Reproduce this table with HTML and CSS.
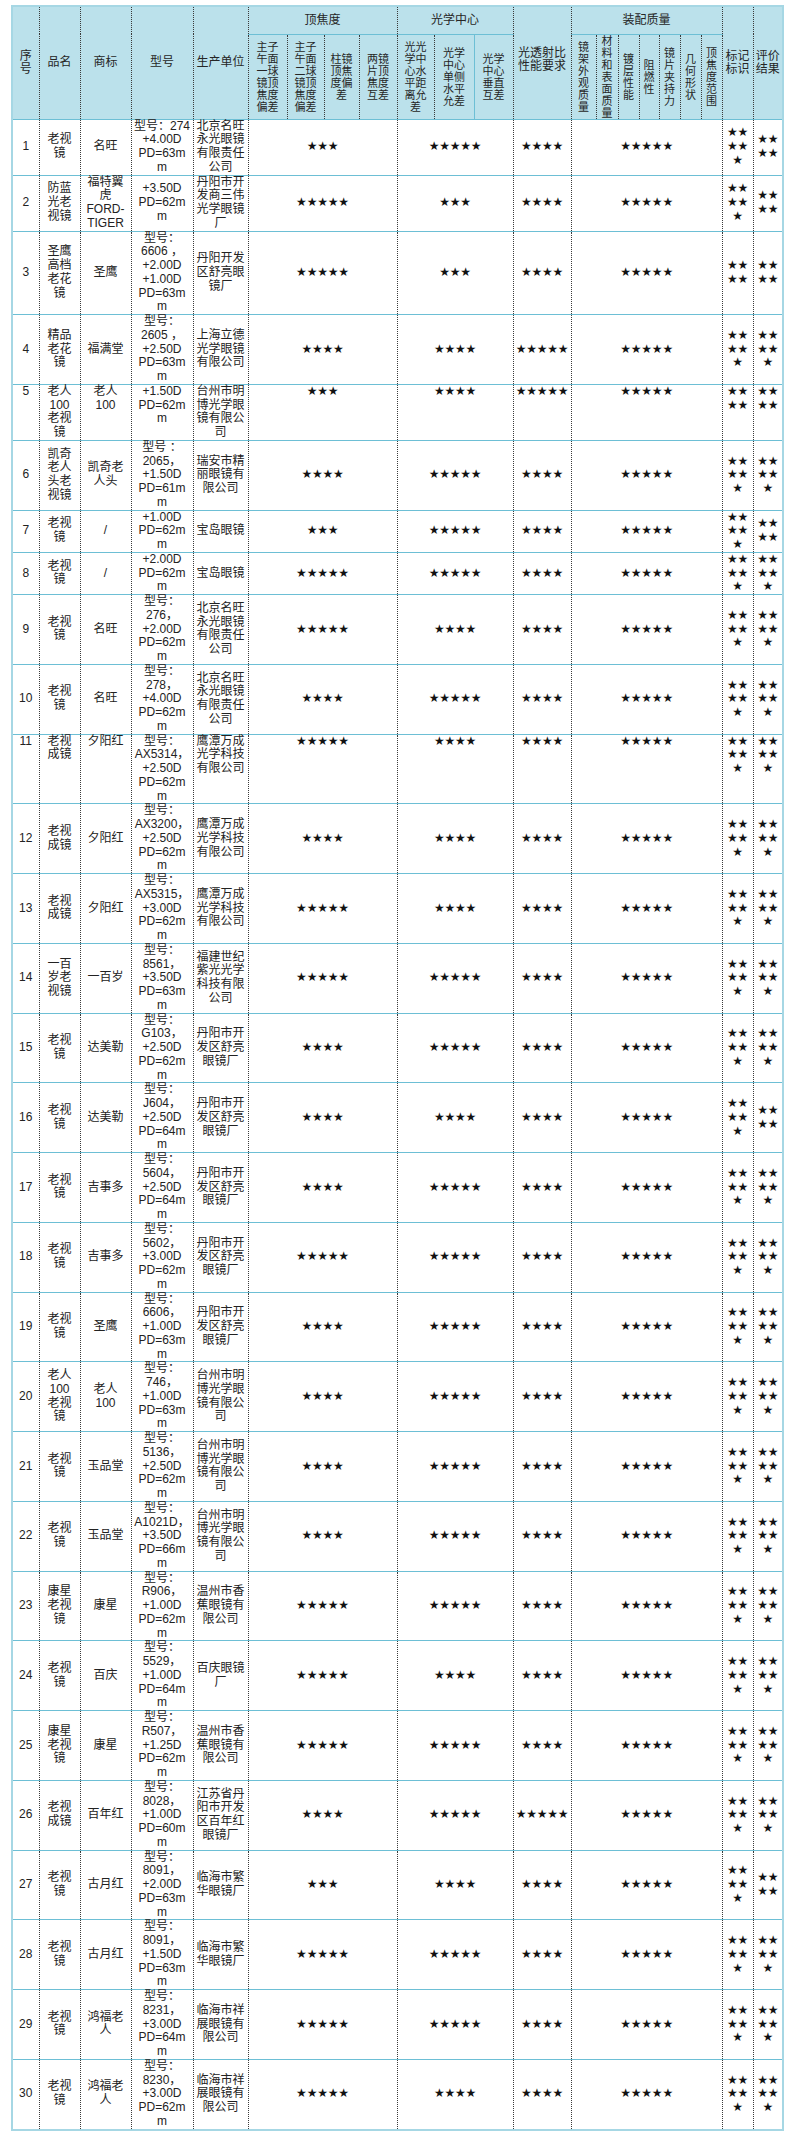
FILE: index.html
```html
<!DOCTYPE html>
<html lang="zh-CN">
<head>
<meta charset="utf-8">
<title>老视镜比较试验结果</title>
<link rel="stylesheet" href="styles.css">
</head>
<body>
<table class="report">
<colgroup>
<col class="c-idx"><col class="c-name"><col class="c-brand"><col class="c-model"><col class="c-maker">
<col class="c-v1"><col class="c-v2"><col class="c-v3"><col class="c-v4">
<col class="c-o1"><col class="c-o2"><col class="c-o3">
<col class="c-trans">
<col class="c-a1"><col class="c-a2"><col class="c-a3"><col class="c-a4"><col class="c-a5"><col class="c-a6"><col class="c-a7">
<col class="c-mark"><col class="c-eval">
</colgroup>
<thead>
<tr class="grp">
<th rowspan="2" class="idx">序<br>号</th>
<th rowspan="2">品名</th>
<th rowspan="2">商标</th>
<th rowspan="2">型号</th>
<th rowspan="2">生产单位</th>
<th colspan="4" class="g">顶焦度</th>
<th colspan="3" class="g">光学中心</th>
<th rowspan="2" class="up">光透射比<br>性能要求</th>
<th colspan="7" class="g">装配质量</th>
<th rowspan="2" class="two">标记<br>标识</th>
<th rowspan="2" class="two">评价<br>结果</th>
</tr>
<tr class="sub">
<th>主子<br>午面<br>一球<br>镜顶<br>焦度<br>偏差</th>
<th>主子<br>午面<br>二球<br>镜顶<br>焦度<br>偏差</th>
<th>柱镜<br>顶焦<br>度偏<br>差</th>
<th>两镜<br>片顶<br>焦度<br>互差</th>
<th>光光<br>学中<br>心水<br>平距<br>离允<br>差</th>
<th>光学<br>中心<br>单侧<br>水平<br>允差</th>
<th class="solid-r">光学<br>中心<br>垂直<br>互差</th>
<th>镜<br>架<br>外<br>观<br>质<br>量</th>
<th>材<br>料<br>和<br>表<br>面<br>质<br>量</th>
<th>镀<br>层<br>性<br>能</th>
<th>阻<br>燃<br>性</th>
<th>镜<br>片<br>夹<br>持<br>力</th>
<th>几<br>何<br>形<br>状</th>
<th>顶<br>焦<br>度<br>范<br>围</th>
</tr>
</thead>
<tbody>
<tr><td>1</td><td>老视<br>镜</td><td>名旺</td><td>型号：274<br>+4.00D<br>PD=63m<br>m</td><td>北京名旺<br>永光眼镜<br>有限责任<br>公司</td><td colspan="4" class="st">★★★</td><td colspan="3" class="st">★★★★★</td><td class="st">★★★★</td><td colspan="7" class="st">★★★★★</td><td class="st wrap">★★★★★</td><td class="st wrap">★★★★</td></tr>
<tr><td>2</td><td>防蓝<br>光老<br>视镜</td><td>福特翼<br>虎<br>FORD-<br>TIGER</td><td>+3.50D<br>PD=62m<br>m</td><td>丹阳市开<br>发商三伟<br>光学眼镜<br>厂</td><td colspan="4" class="st">★★★★★</td><td colspan="3" class="st">★★★</td><td class="st">★★★★</td><td colspan="7" class="st">★★★★★</td><td class="st wrap">★★★★★</td><td class="st wrap">★★★★</td></tr>
<tr><td>3</td><td>圣鹰<br>高档<br>老花<br>镜</td><td>圣鹰</td><td>型号：<br>6606 ，<br>+2.00D<br>+1.00D<br>PD=63m<br>m</td><td>丹阳开发<br>区舒亮眼<br>镜厂</td><td colspan="4" class="st">★★★★★</td><td colspan="3" class="st">★★★</td><td class="st">★★★★</td><td colspan="7" class="st">★★★★★</td><td class="st wrap">★★★★</td><td class="st wrap">★★★★</td></tr>
<tr><td>4</td><td>精品<br>老花<br>镜</td><td>福满堂</td><td>型号：<br>2605 ，<br>+2.50D<br>PD=63m<br>m</td><td>上海立德<br>光学眼镜<br>有限公司</td><td colspan="4" class="st">★★★★</td><td colspan="3" class="st">★★★★</td><td class="st">★★★★★</td><td colspan="7" class="st">★★★★★</td><td class="st wrap">★★★★★</td><td class="st wrap">★★★★★</td></tr>
<tr class="top"><td>5</td><td>老人<br>100<br>老视<br>镜</td><td>老人<br>100</td><td>+1.50D<br>PD=62m<br>m</td><td>台州市明<br>博光学眼<br>镜有限公<br>司</td><td colspan="4" class="st">★★★</td><td colspan="3" class="st">★★★★</td><td class="st">★★★★★</td><td colspan="7" class="st">★★★★★</td><td class="st wrap">★★★★</td><td class="st wrap">★★★★</td></tr>
<tr><td>6</td><td>凯奇<br>老人<br>头老<br>视镜</td><td>凯奇老<br>人头</td><td>型号 ：<br>2065，<br>+1.50D<br>PD=61m<br>m</td><td>瑞安市精<br>丽眼镜有<br>限公司</td><td colspan="4" class="st">★★★★</td><td colspan="3" class="st">★★★★★</td><td class="st">★★★★</td><td colspan="7" class="st">★★★★★</td><td class="st wrap">★★★★★</td><td class="st wrap">★★★★★</td></tr>
<tr><td>7</td><td>老视<br>镜</td><td>/</td><td>+1.00D<br>PD=62m<br>m</td><td>宝岛眼镜</td><td colspan="4" class="st">★★★</td><td colspan="3" class="st">★★★★★</td><td class="st">★★★★</td><td colspan="7" class="st">★★★★★</td><td class="st wrap">★★★★★</td><td class="st wrap">★★★★</td></tr>
<tr><td>8</td><td>老视<br>镜</td><td>/</td><td>+2.00D<br>PD=62m<br>m</td><td>宝岛眼镜</td><td colspan="4" class="st">★★★★★</td><td colspan="3" class="st">★★★★★</td><td class="st">★★★★</td><td colspan="7" class="st">★★★★★</td><td class="st wrap">★★★★★</td><td class="st wrap">★★★★★</td></tr>
<tr><td>9</td><td>老视<br>镜</td><td>名旺</td><td>型号：<br>276，<br>+2.00D<br>PD=62m<br>m</td><td>北京名旺<br>永光眼镜<br>有限责任<br>公司</td><td colspan="4" class="st">★★★★★</td><td colspan="3" class="st">★★★★</td><td class="st">★★★★</td><td colspan="7" class="st">★★★★★</td><td class="st wrap">★★★★★</td><td class="st wrap">★★★★★</td></tr>
<tr><td>10</td><td>老视<br>镜</td><td>名旺</td><td>型号：<br>278，<br>+4.00D<br>PD=62m<br>m</td><td>北京名旺<br>永光眼镜<br>有限责任<br>公司</td><td colspan="4" class="st">★★★★</td><td colspan="3" class="st">★★★★★</td><td class="st">★★★★</td><td colspan="7" class="st">★★★★★</td><td class="st wrap">★★★★★</td><td class="st wrap">★★★★★</td></tr>
<tr class="top"><td>11</td><td>老视<br>成镜</td><td>夕阳红</td><td>型号：<br>AX5314，<br>+2.50D<br>PD=62m<br>m</td><td>鹰潭万成<br>光学科技<br>有限公司</td><td colspan="4" class="st">★★★★★</td><td colspan="3" class="st">★★★★</td><td class="st">★★★★</td><td colspan="7" class="st">★★★★★</td><td class="st wrap">★★★★★</td><td class="st wrap">★★★★★</td></tr>
<tr><td>12</td><td>老视<br>成镜</td><td>夕阳红</td><td>型号：<br>AX3200，<br>+2.50D<br>PD=62m<br>m</td><td>鹰潭万成<br>光学科技<br>有限公司</td><td colspan="4" class="st">★★★★</td><td colspan="3" class="st">★★★★</td><td class="st">★★★★</td><td colspan="7" class="st">★★★★★</td><td class="st wrap">★★★★★</td><td class="st wrap">★★★★★</td></tr>
<tr><td>13</td><td>老视<br>成镜</td><td>夕阳红</td><td>型号：<br>AX5315，<br>+3.00D<br>PD=62m<br>m</td><td>鹰潭万成<br>光学科技<br>有限公司</td><td colspan="4" class="st">★★★★★</td><td colspan="3" class="st">★★★★</td><td class="st">★★★★</td><td colspan="7" class="st">★★★★★</td><td class="st wrap">★★★★★</td><td class="st wrap">★★★★★</td></tr>
<tr><td>14</td><td>一百<br>岁老<br>视镜</td><td>一百岁</td><td>型号：<br>8561，<br>+3.50D<br>PD=63m<br>m</td><td>福建世纪<br>紫光光学<br>科技有限<br>公司</td><td colspan="4" class="st">★★★★★</td><td colspan="3" class="st">★★★★★</td><td class="st">★★★★</td><td colspan="7" class="st">★★★★★</td><td class="st wrap">★★★★★</td><td class="st wrap">★★★★★</td></tr>
<tr><td>15</td><td>老视<br>镜</td><td>达美勒</td><td>型号：<br>G103，<br>+2.50D<br>PD=62m<br>m</td><td>丹阳市开<br>发区舒亮<br>眼镜厂</td><td colspan="4" class="st">★★★★</td><td colspan="3" class="st">★★★★★</td><td class="st">★★★★</td><td colspan="7" class="st">★★★★★</td><td class="st wrap">★★★★★</td><td class="st wrap">★★★★★</td></tr>
<tr><td>16</td><td>老视<br>镜</td><td>达美勒</td><td>型号：<br>J604，<br>+2.50D<br>PD=64m<br>m</td><td>丹阳市开<br>发区舒亮<br>眼镜厂</td><td colspan="4" class="st">★★★★</td><td colspan="3" class="st">★★★★</td><td class="st">★★★★</td><td colspan="7" class="st">★★★★★</td><td class="st wrap">★★★★★</td><td class="st wrap">★★★★</td></tr>
<tr><td>17</td><td>老视<br>镜</td><td>吉事多</td><td>型号：<br>5604，<br>+2.50D<br>PD=64m<br>m</td><td>丹阳市开<br>发区舒亮<br>眼镜厂</td><td colspan="4" class="st">★★★★</td><td colspan="3" class="st">★★★★★</td><td class="st">★★★★</td><td colspan="7" class="st">★★★★★</td><td class="st wrap">★★★★★</td><td class="st wrap">★★★★★</td></tr>
<tr><td>18</td><td>老视<br>镜</td><td>吉事多</td><td>型号：<br>5602，<br>+3.00D<br>PD=62m<br>m</td><td>丹阳市开<br>发区舒亮<br>眼镜厂</td><td colspan="4" class="st">★★★★★</td><td colspan="3" class="st">★★★★★</td><td class="st">★★★★</td><td colspan="7" class="st">★★★★★</td><td class="st wrap">★★★★★</td><td class="st wrap">★★★★★</td></tr>
<tr><td>19</td><td>老视<br>镜</td><td>圣鹰</td><td>型号：<br>6606，<br>+1.00D<br>PD=63m<br>m</td><td>丹阳市开<br>发区舒亮<br>眼镜厂</td><td colspan="4" class="st">★★★★</td><td colspan="3" class="st">★★★★★</td><td class="st">★★★★</td><td colspan="7" class="st">★★★★★</td><td class="st wrap">★★★★★</td><td class="st wrap">★★★★★</td></tr>
<tr><td>20</td><td>老人<br>100<br>老视<br>镜</td><td>老人<br>100</td><td>型号：<br>746，<br>+1.00D<br>PD=63m<br>m</td><td>台州市明<br>博光学眼<br>镜有限公<br>司</td><td colspan="4" class="st">★★★★</td><td colspan="3" class="st">★★★★★</td><td class="st">★★★★</td><td colspan="7" class="st">★★★★★</td><td class="st wrap">★★★★★</td><td class="st wrap">★★★★★</td></tr>
<tr><td>21</td><td>老视<br>镜</td><td>玉品堂</td><td>型号：<br>5136，<br>+2.50D<br>PD=62m<br>m</td><td>台州市明<br>博光学眼<br>镜有限公<br>司</td><td colspan="4" class="st">★★★★</td><td colspan="3" class="st">★★★★★</td><td class="st">★★★★</td><td colspan="7" class="st">★★★★★</td><td class="st wrap">★★★★★</td><td class="st wrap">★★★★★</td></tr>
<tr><td>22</td><td>老视<br>镜</td><td>玉品堂</td><td>型号：<br>A1021D，<br>+3.50D<br>PD=66m<br>m</td><td>台州市明<br>博光学眼<br>镜有限公<br>司</td><td colspan="4" class="st">★★★★</td><td colspan="3" class="st">★★★★★</td><td class="st">★★★★</td><td colspan="7" class="st">★★★★★</td><td class="st wrap">★★★★★</td><td class="st wrap">★★★★★</td></tr>
<tr><td>23</td><td>康星<br>老视<br>镜</td><td>康星</td><td>型号：<br>R906，<br>+1.00D<br>PD=62m<br>m</td><td>温州市香<br>蕉眼镜有<br>限公司</td><td colspan="4" class="st">★★★★★</td><td colspan="3" class="st">★★★★★</td><td class="st">★★★★</td><td colspan="7" class="st">★★★★★</td><td class="st wrap">★★★★★</td><td class="st wrap">★★★★★</td></tr>
<tr><td>24</td><td>老视<br>镜</td><td>百庆</td><td>型号：<br>5529，<br>+1.00D<br>PD=64m<br>m</td><td>百庆眼镜<br>厂</td><td colspan="4" class="st">★★★★★</td><td colspan="3" class="st">★★★★</td><td class="st">★★★★</td><td colspan="7" class="st">★★★★★</td><td class="st wrap">★★★★★</td><td class="st wrap">★★★★★</td></tr>
<tr><td>25</td><td>康星<br>老视<br>镜</td><td>康星</td><td>型号：<br>R507，<br>+1.25D<br>PD=62m<br>m</td><td>温州市香<br>蕉眼镜有<br>限公司</td><td colspan="4" class="st">★★★★★</td><td colspan="3" class="st">★★★★★</td><td class="st">★★★★</td><td colspan="7" class="st">★★★★★</td><td class="st wrap">★★★★★</td><td class="st wrap">★★★★★</td></tr>
<tr><td>26</td><td>老视<br>成镜</td><td>百年红</td><td>型号：<br>8028，<br>+1.00D<br>PD=60m<br>m</td><td>江苏省丹<br>阳市开发<br>区百年红<br>眼镜厂</td><td colspan="4" class="st">★★★★</td><td colspan="3" class="st">★★★★★</td><td class="st">★★★★★</td><td colspan="7" class="st">★★★★★</td><td class="st wrap">★★★★★</td><td class="st wrap">★★★★★</td></tr>
<tr><td>27</td><td>老视<br>镜</td><td>古月红</td><td>型号：<br>8091，<br>+2.00D<br>PD=63m<br>m</td><td>临海市繁<br>华眼镜厂</td><td colspan="4" class="st">★★★</td><td colspan="3" class="st">★★★★</td><td class="st">★★★★</td><td colspan="7" class="st">★★★★★</td><td class="st wrap">★★★★★</td><td class="st wrap">★★★★</td></tr>
<tr><td>28</td><td>老视<br>镜</td><td>古月红</td><td>型号：<br>8091，<br>+1.50D<br>PD=63m<br>m</td><td>临海市繁<br>华眼镜厂</td><td colspan="4" class="st">★★★★★</td><td colspan="3" class="st">★★★★★</td><td class="st">★★★★</td><td colspan="7" class="st">★★★★★</td><td class="st wrap">★★★★★</td><td class="st wrap">★★★★★</td></tr>
<tr><td>29</td><td>老视<br>镜</td><td>鸿福老<br>人</td><td>型号：<br>8231，<br>+3.00D<br>PD=64m<br>m</td><td>临海市祥<br>展眼镜有<br>限公司</td><td colspan="4" class="st">★★★★★</td><td colspan="3" class="st">★★★★★</td><td class="st">★★★★</td><td colspan="7" class="st">★★★★★</td><td class="st wrap">★★★★★</td><td class="st wrap">★★★★★</td></tr>
<tr><td>30</td><td>老视<br>镜</td><td>鸿福老<br>人</td><td>型号：<br>8230，<br>+3.00D<br>PD=62m<br>m</td><td>临海市祥<br>展眼镜有<br>限公司</td><td colspan="4" class="st">★★★★★</td><td colspan="3" class="st">★★★★</td><td class="st">★★★★</td><td colspan="7" class="st">★★★★★</td><td class="st wrap">★★★★★</td><td class="st wrap">★★★★★</td></tr>
</tbody>
</table>
</body>
</html>
```
FILE: styles.css
```css
* { box-sizing: border-box; }
html, body { margin: 0; background: #ffffff; }
body {
  padding: 5px 0 0 11px;
  font-family: "Liberation Sans", "Noto Sans CJK SC", sans-serif;
  font-size: 12px;
  color: #222222;
}
.report {
  border-collapse: collapse;
  table-layout: fixed;
  width: 772px;
  border: 2px solid #a6d7e4;
}
.c-idx { width: 27px; }
.c-name { width: 41px; }
.c-brand { width: 51px; }
.c-model { width: 62px; }
.c-maker { width: 55px; }
.c-v1 { width: 39px; }
.c-v2 { width: 37px; }
.c-v3 { width: 35px; }
.c-v4 { width: 38px; }
.c-o1 { width: 37px; }
.c-o2 { width: 40px; }
.c-o3 { width: 39px; }
.c-trans { width: 58px; }
.c-a1 { width: 25px; }
.c-a2 { width: 22px; }
.c-a3 { width: 21px; }
.c-a4 { width: 20px; }
.c-a5 { width: 21px; }
.c-a6 { width: 21px; }
.c-a7 { width: 21px; }
.c-mark { width: 31px; }
.c-eval { width: 30px; }

.report th, .report td {
  padding: 0;
  text-align: center;
  vertical-align: middle;
  font-weight: normal;
  border-left: 1px dotted #3a3a3a;
  border-right: 1px dotted #3a3a3a;
  border-top: 1px solid #6dbfd5;
  border-bottom: 1px solid #6dbfd5;
}
.report thead th {
  background: #bbe1eb;
  line-height: 13px;
  color: #262626;
}
.report thead tr.grp th { height: 28px; }
.report thead tr.sub th {
  height: 81px;
  font-size: 11px;
  line-height: 12px;
}
.report thead th.up { padding-bottom: 6px; }
.report thead th.solid-r { border-left: 1px solid #6dbfd5; }
.report tbody td { line-height: 13.75px; }
.report tbody tr.top td { vertical-align: top; }
.report td.st {
  font-family: "DejaVu Sans", sans-serif;
  font-size: 12px;
  letter-spacing: -0.2px;
  color: #111111;
}
.report td.wrap {
  padding: 0 3px;
  word-break: break-all;
  line-break: anywhere;
}
```
